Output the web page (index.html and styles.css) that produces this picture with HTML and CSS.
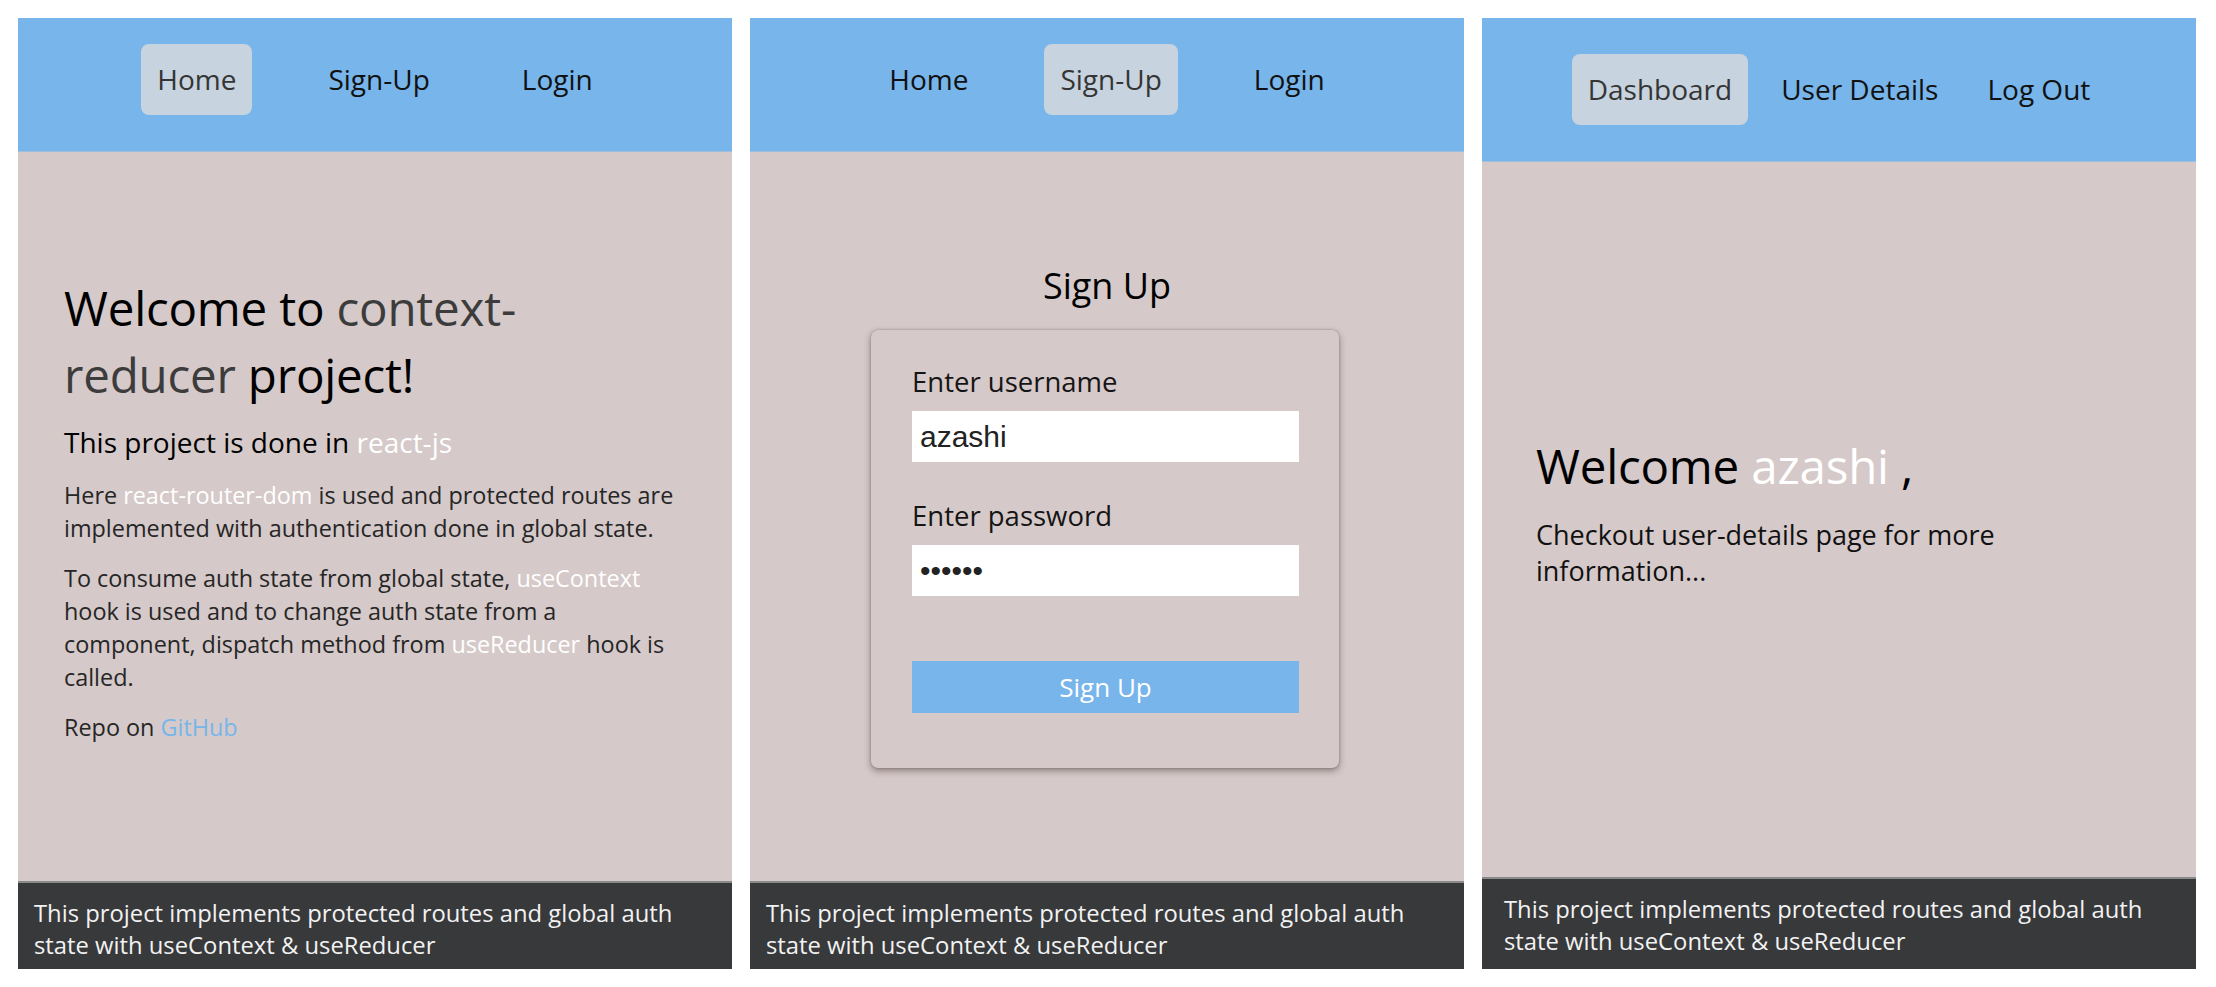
FILE: index.html
```html
<!DOCTYPE html>
<html lang="en">
<head>
<meta charset="utf-8">
<title>context-reducer</title>
<link rel="stylesheet" href="styles.css">
</head>
<body>
<div class="screens">
  <section class="phone">
    <nav class="nav">
      <a class="nav-link active">Home</a>
      <a class="nav-link">Sign-Up</a>
      <a class="nav-link">Login</a>
    </nav>
    <main class="home">
      <h1 class="title">Welcome to <span class="muted">context-<br>reducer</span> project!</h1>
      <h2 class="subtitle">This project is done in <span class="hl">react-js</span></h2>
      <p class="para">Here <span class="hl">react-router-dom</span> is used and protected routes are<br>implemented with authentication done in global state.</p>
      <p class="para">To consume auth state from global state, <span class="hl">useContext</span><br>hook is used and to change auth state from a<br>component, dispatch method from <span class="hl">useReducer</span> hook is<br>called.</p>
      <p class="para">Repo on <a class="link">GitHub</a></p>
    </main>
    <footer class="foot">This project implements protected routes and global auth<br>state with useContext &amp; useReducer</footer>
  </section>

  <section class="phone">
    <nav class="nav">
      <a class="nav-link">Home</a>
      <a class="nav-link active">Sign-Up</a>
      <a class="nav-link">Login</a>
    </nav>
    <main class="signup">
      <h2 class="form-title">Sign Up</h2>
      <form class="card">
        <label class="label" for="user">Enter username</label>
        <input class="field" id="user" type="text" value="azashi">
        <label class="label label-second" for="pass">Enter password</label>
        <input class="field" id="pass" type="password" value="azashi">
        <button class="submit" type="button">Sign Up</button>
      </form>
    </main>
    <footer class="foot">This project implements protected routes and global auth<br>state with useContext &amp; useReducer</footer>
  </section>

  <section class="phone">
    <nav class="nav nav-auth">
      <a class="nav-link active">Dashboard</a>
      <a class="nav-link">User Details</a>
      <a class="nav-link">Log Out</a>
    </nav>
    <main class="dash">
      <h1 class="title">Welcome <span class="hl">azashi</span> ,</h1>
      <p class="dash-text">Checkout user-details page for more<br>information...</p>
    </main>
    <footer class="foot foot-auth">This project implements protected routes and global auth<br>state with useContext &amp; useReducer</footer>
  </section>
</div>
</body>
</html>
```

FILE: styles.css
```css
* { box-sizing: border-box; }

body {
  margin: 0;
  background: #ffffff;
  font-family: "Open Sans", "Noto Sans", sans-serif;
  color: #111;
}

.screens {
  display: flex;
  gap: 18px;
  padding: 18px 0 0 18px;
}

.phone {
  width: 714px;
  height: 951px;
  display: flex;
  flex-direction: column;
  background: #d5c9c9;
}

/* navigation */
.nav {
  height: 134px;
  flex: none;
  display: flex;
  justify-content: center;
  align-items: flex-start;
  gap: 60px;
  padding-top: 26px;
  background: #77b5ea;
  border-bottom: 1px solid #9fbfdc;
}

.nav-auth {
  height: 144px;
  gap: 17px;
  padding-top: 36px;
}

.nav-link {
  display: block;
  padding: 18px 16px;
  font-size: 28px;
  line-height: 35px;
  color: #111;
  border-radius: 8px;
}

.nav-link.active {
  background: #c7d3de;
  color: #353535;
}

/* home */
.home {
  flex: 1;
  padding: 122px 6px 0 46px;
}

.title {
  margin: 0;
  font-size: 47.5px;
  line-height: 67px;
  font-weight: 400;
  color: #000;
  letter-spacing: -0.2px;
}

.muted { color: #3c3c3c; }
.hl { color: #ffffff; }
.link { color: #78b5ea; }

.subtitle {
  margin: 14px 0 0;
  font-size: 28px;
  line-height: 40px;
  font-weight: 400;
  color: #000;
}

.para {
  margin: 17px 0 0;
  font-size: 23.4px;
  line-height: 33px;
  color: #262626;
}

/* sign up */
.signup {
  flex: 1;
  display: flex;
  flex-direction: column;
  align-items: center;
  padding-top: 112px;
}

.form-title {
  margin: 0;
  font-size: 36px;
  line-height: 44px;
  font-weight: 400;
  color: #000;
}

.card {
  margin-top: 22px;
  margin-right: 4px;
  width: 468px;
  height: 438px;
  display: flex;
  flex-direction: column;
  padding: 34px 40px 0 41px;
  border-radius: 7px;
  background: #d5c9c9;
  box-shadow: 0 3px 7px rgba(60, 40, 40, 0.45), 0 0 2px rgba(60, 40, 40, 0.35);
}

.label {
  font-size: 27.5px;
  line-height: 36px;
  color: #151515;
}

.label-second { margin-top: 36px; }

.field {
  margin-top: 11px;
  height: 51px;
  width: 100%;
  border: none;
  outline: none;
  background: #ffffff;
  padding: 0 8px;
  font-family: "Liberation Sans", Arial, sans-serif;
  font-size: 30px;
  color: #222;
}

.submit {
  margin-top: 65px;
  height: 52px;
  width: 100%;
  border: none;
  background: #77b5ea;
  color: #ffffff;
  font-family: "Open Sans", "Noto Sans", sans-serif;
  font-size: 26px;
  line-height: 36px;
}

/* dashboard */
.dash {
  flex: 1;
  padding: 270px 6px 0 54px;
}

.dash-text {
  margin: 18px 0 0;
  font-size: 27px;
  line-height: 36px;
  color: #111;
}

/* footer */
.foot {
  flex: none;
  padding: 14px 16px 8px;
  background: #38393b;
  border-top: 2px solid #8a8a8a;
  color: #f2f2f2;
  font-size: 23.8px;
  line-height: 32px;
}

.foot-auth {
  padding: 14px 22px 12px;
}
```
